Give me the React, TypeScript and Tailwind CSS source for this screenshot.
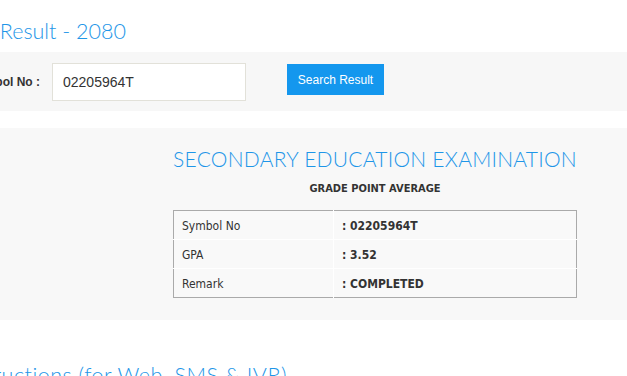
import React from 'react';

const rows = [
  { label: 'Symbol No', value: ': 02205964T' },
  { label: 'GPA', value: ': 3.52' },
  { label: 'Remark', value: ': COMPLETED' },
];

export default function App() {
  return (
    <div className="w-[627px] h-[376px] overflow-hidden bg-white font-['Liberation_Sans',Arial,sans-serif]">
      {/* Page title (scrolled off to the left) */}
      <div className="h-[52px] pt-[16px]">
        <div className="w-[126px] flex justify-end overflow-hidden whitespace-nowrap">
          <h1 className="font-['Lato',sans-serif] font-light text-[21.5px] leading-[30px] text-[#1e96e8]">SEE Result - 2080</h1>
        </div>
      </div>

      {/* Search bar */}
      <div className="h-[59px] bg-[#f7f7f7] flex items-start pt-[11px]">
        <div className="w-[40px] h-[38px] flex items-center justify-end overflow-hidden whitespace-nowrap">
          <span className="text-[12px] font-bold text-[#333]">Symbol No :</span>
        </div>
        <input
          readOnly
          value="02205964T"
          className="ml-[12px] w-[194px] h-[38px] border border-[#e2e1d9] bg-white px-[10px] text-[14px] text-[#333] outline-none"
        />
        <button className="ml-[41px] mt-[1px] w-[97px] h-[31px] bg-[#1497ee] text-white text-[12px]">Search Result</button>
      </div>

      <div className="h-[17px]" />

      {/* Result panel */}
      <div className="h-[192px] bg-[#f8f8f8] pl-[173px] pt-[19px]">
        <div className="w-[404px] flex flex-col items-center">
          <h2 className="font-['Lato',sans-serif] font-light text-[21px] leading-[24px] tracking-[0.25px] text-[#1e96e8] whitespace-nowrap">
            SECONDARY EDUCATION EXAMINATION
          </h2>
          <p className="mt-[10px] font-['DejaVu_Sans_Condensed','DejaVu_Sans',sans-serif] font-bold text-[11px] text-[#333]">GRADE POINT AVERAGE</p>
        </div>
        <table className="mt-[12px] w-[404px] border border-[#aaa] border-collapse font-['DejaVu_Sans_Condensed','DejaVu_Sans',sans-serif] text-[12px] text-[#333]">
          <tbody>
            {rows.map((r, i) => (
              <tr key={r.label} className={i > 0 ? 'border-t border-white' : ''}>
                <td className="w-[160px] h-[29px] px-[8px] pt-[2px] bg-[#f9f9f9] border-r border-white">{r.label}</td>
                <td className="h-[29px] px-[8px] pt-[2px] bg-[#f9f9f9] font-bold">{r.value}</td>
              </tr>
            ))}
          </tbody>
        </table>
      </div>

      {/* Next section heading */}
      <div className="pt-[40px]">
        <div className="w-[287px] flex justify-end overflow-hidden whitespace-nowrap">
          <h2 className="font-['Lato',sans-serif] font-light text-[21.5px] leading-[30px] tracking-[0.5px] text-[#1e96e8]">Instructions (for Web, SMS &amp; IVR)</h2>
        </div>
      </div>
    </div>
  );
}
